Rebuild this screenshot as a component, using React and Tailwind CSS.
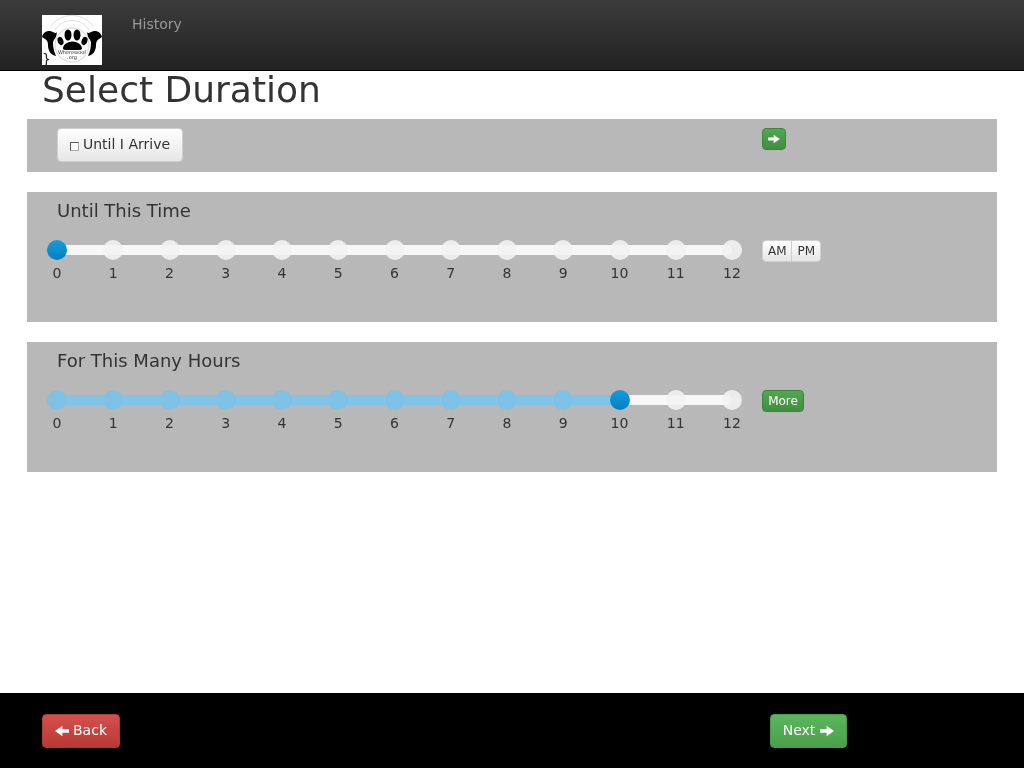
const hours = [0, 1, 2, 3, 4, 5, 6, 7, 8, 9, 10, 11, 12];

function ArrowRightIcon({ className }) {
  return (
    <svg viewBox="0 0 14 12" className={className} fill="currentColor">
      <path d="M0 4.200h6.600V.8L14 6l-7.400 5.200V7.800H0z" />
    </svg>
  );
}

function ArrowLeftIcon({ className }) {
  return (
    <svg viewBox="0 0 14 12" className={className} fill="currentColor">
      <path d="M14 4.200H7.400V.8L0 6l7.400 5.200V7.800H14z" />
    </svg>
  );
}

function Logo() {
  return (
    <div className="relative w-[60px] h-[50px] bg-white">
      <svg viewBox="0 0 60 50" className="w-[60px] h-[50px]">
        <path d="M13 15a20 20 0 0 1 34 0M9 11a26 26 0 0 1 42 0" fill="none" stroke="#ccc" strokeWidth="0.6" />
        <circle cx="30" cy="30" r="17" fill="none" stroke="#bbb" strokeWidth="0.6" />
        <ellipse cx="26" cy="20" rx="3.500" ry="5.500" fill="#000" />
        <ellipse cx="35" cy="20" rx="3.500" ry="5.500" fill="#000" />
        <ellipse cx="18.500" cy="26" rx="2.800" ry="4.200" fill="#000" transform="rotate(-20 18.500 26)" />
        <ellipse cx="42.500" cy="26" rx="2.800" ry="4.200" fill="#000" transform="rotate(20 42.500 26)" />
        <path d="M21 33.500c0-4 5-7 9.500-7s9.500 3 9.500 7c0 2-4 1.500-9.500 1.500s-9.500 .5-9.500-1.500z" fill="#000" />
        <path d="M0 22c1-4 4-6 7-6 3 0 5 2 7 2l1-1-1 5c-1 2-3 3-3 6 0 4 1 9 3 13-5-1-8-5-8-11 0-3-1-5-3-6-1-1-2-1-3-2z" fill="#000" />
        <path d="M60 22c-1-4-4-6-7-6-3 0-5 2-7 2l-1-1 1 5c1 2 3 3 3 6 0 4-1 9-3 13 5-1 8-5 8-11 0-3 1-5 3-6 1-1 2-1 3-2z" fill="#000" />
      </svg>
      <span className="absolute left-0 right-0 top-[35px] text-center text-[5px] leading-[5px] text-[#333]">
        Wherewoof
        <br />
        .org
      </span>
      <span className="absolute left-0 top-[36px] text-[14px] leading-[17px] text-[#222]">{"}"}</span>
    </div>
  );
}

function Slider({ value, filled }) {
  return (
    <div className="w-[695px]">
      <div className="relative h-5">
        <div className="absolute left-[10px] top-[5px] w-[675px] h-[10px] rounded-[5px] bg-[#f7f7f7]" />
        {filled && (
          <div
            className="absolute left-[10px] top-[5px] h-[10px] bg-[#80c5e9]"
            style={{ width: value * 56.25 }}
          />
        )}
        <div className="relative flex justify-between">
          {hours.map((hour) => {
            const active = hour === value;
            const done = filled && hour < value;
            return (
              <span
                key={hour}
                className={
                  active
                    ? "w-5 h-5 rounded-full bg-gradient-to-b from-[#149bdf] to-[#0480be]"
                    : done
                      ? "w-5 h-5 rounded-full bg-[#7cc1e6]/90"
                      : "w-5 h-5 rounded-full bg-[#f2f2f2]/90"
                }
              />
            );
          })}
        </div>
      </div>
      <div className="flex justify-between mt-[3px]">
        {hours.map((hour) => (
          <span key={hour} className="w-5 flex justify-center text-[14px] leading-[20px] text-[#333]">
            {hour}
          </span>
        ))}
      </div>
    </div>
  );
}

function GreenButton({ className, children }) {
  return (
    <button className={`flex items-center justify-center rounded-[4px] border border-[#3a863a] bg-gradient-to-b from-[#52a852] to-[#3f8f3f] text-white ${className}`}>
      {children}
    </button>
  );
}

function SliderPanel({ title, value, filled, children }) {
  return (
    <section className="h-[130px] mb-5 bg-[#b8b8b8] pt-[7px]">
      <h2 className="pl-[30px] text-[18px] leading-[24px] text-[#333]">{title}</h2>
      <div className="flex pl-5 mt-[17px]">
        <Slider value={value} filled={filled} />
        <div className="ml-5">{children}</div>
      </div>
    </section>
  );
}

export default function App() {
  return (
    <div className="relative h-[768px] overflow-hidden will-change-transform font-['DejaVu_Sans',sans-serif] text-[#333]">
      <header className="flex h-[71px] border-b border-black bg-gradient-to-b from-[#3c3c3c] to-[#222222] pl-[42px]">
        <div className="pt-[15px]">
          <Logo />
        </div>
        <a className="ml-[30px] mt-[14px] text-[14px] leading-[20px] text-[#999999]">History</a>
      </header>

      <h1 className="pl-[42px] h-[48px] text-[36px] leading-[38px] text-[#333]">Select Duration</h1>

      <main className="mx-[27px]">
        <section className="flex h-[53px] mb-5 bg-[#b8b8b8] pl-[30px] pt-[9px]">
          <div className="w-[705px]">
            <button className="flex items-center h-[34px] w-[126px] rounded-[4px] border border-[#cfcfcf] bg-gradient-to-b from-white to-[#e6e6e6] pl-[12px] pb-[2px] text-[14px] text-[#333]">
              <span className="w-[9px] h-[9px] mt-[5px] mr-[4px] border border-[#555] border-r-[#aaa] border-b-[#aaa] bg-white" />
              Until I Arrive
            </button>
          </div>
          <GreenButton className="w-6 h-[22px]">
            <ArrowRightIcon className="w-[12px] h-[10px]" />
          </GreenButton>
        </section>

        <SliderPanel title="Until This Time" value={0}>
          <div className="flex w-[59px] h-[22px] rounded-[4px] border border-[#cfcfcf] bg-gradient-to-b from-white to-[#e6e6e6] text-[12px] leading-[20px] text-[#333]">
            <span className="w-[30px] text-center border-r border-[#cccccc]">AM</span>
            <span className="w-[28px] text-center">PM</span>
          </div>
        </SliderPanel>

        <SliderPanel title="For This Many Hours" value={10} filled>
          <GreenButton className="w-[42px] h-[22px] text-[12px]">More</GreenButton>
        </SliderPanel>
      </main>

      <footer className="absolute left-0 right-0 bottom-0 flex h-[75px] bg-black pl-[42px] pt-[21px]">
        <button className="flex items-center justify-center gap-[4px] w-[78px] h-[34px] rounded-[4px] border border-[#b33a36] bg-gradient-to-b from-[#d5504c] to-[#b83a35] pb-[2px] text-[14px] text-white">
          <ArrowLeftIcon className="w-[14px] h-[12px] mt-[1px]" />
          Back
        </button>
        <button className="flex items-center justify-center gap-[5px] ml-[650px] w-[77px] h-[34px] rounded-[4px] border border-[#4a9a4a] bg-gradient-to-b from-[#5bb65b] to-[#4aa04a] pb-[2px] text-[14px] text-white">
          Next
          <ArrowRightIcon className="w-[14px] h-[12px] mt-[1px]" />
        </button>
      </footer>
    </div>
  );
}
